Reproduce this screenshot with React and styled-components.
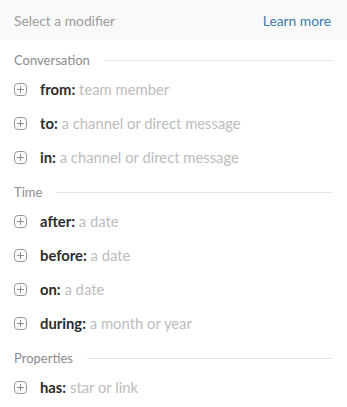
import React from "react";
import styled, { createGlobalStyle } from "styled-components";

const GlobalStyle = createGlobalStyle`
  html, body {
    margin: 0;
    padding: 0;
    background: #ffffff;
  }
  body {
    font-family: Lato, "Noto Sans", sans-serif;
    -webkit-font-smoothing: antialiased;
  }
`;

const sections = [
  {
    title: "Conversation",
    items: [
      { key: "from:", hint: "team member" },
      { key: "to:", hint: "a channel or direct message" },
      { key: "in:", hint: "a channel or direct message" },
    ],
  },
  {
    title: "Time",
    items: [
      { key: "after:", hint: "a date" },
      { key: "before:", hint: "a date" },
      { key: "on:", hint: "a date" },
      { key: "during:", hint: "a month or year" },
    ],
  },
  {
    title: "Properties",
    items: [{ key: "has:", hint: "star or link" }],
  },
];

const PlusIcon = () => (
  <svg width="13" height="13" viewBox="0 0 13 13" fill="none">
    <rect x="0.5" y="0.5" width="12" height="12" rx="3.5" stroke="#979797" />
    <path d="M6.5 3.5v6M3.5 6.5h6" stroke="#8a8a8a" strokeLinecap="round" />
  </svg>
);

const App = () => {
  return (
    <>
      <GlobalStyle />
      <Panel>
        <Header>
          <HeaderTitle>Select a modifier</HeaderTitle>
          <LearnMore href="#">Learn more</LearnMore>
        </Header>
        <List>
          {sections.map((section) => (
            <Section key={section.title}>
              <SectionHeading>
                <span>{section.title}</span>
                <Rule />
              </SectionHeading>
              {section.items.map((item) => (
                <Row key={item.key}>
                  <PlusIcon />
                  <Label>
                    <strong>{item.key}</strong> <Hint>{item.hint}</Hint>
                  </Label>
                </Row>
              ))}
            </Section>
          ))}
        </List>
      </Panel>
    </>
  );
};

export default App;

const Panel = styled.div`
  width: 347px;
  height: 407px;
  background: #ffffff;
  overflow: hidden;
`;

const Header = styled.div`
  display: flex;
  justify-content: space-between;
  align-items: center;
  height: 40px;
  padding: 0 16px 0 14px;
  background: #f9f9f9;
  font-size: 13.8px;
`;

const HeaderTitle = styled.span`
  color: #9b9b9b;
`;

const LearnMore = styled.a`
  color: #3b7ca6;
  text-decoration: none;
`;

const List = styled.div`
  padding-top: 2px;
`;

const Section = styled.div`
  display: flex;
  flex-direction: column;
`;

const SectionHeading = styled.div`
  display: flex;
  align-items: center;
  gap: 14px;
  height: 30px;
  box-sizing: border-box;
  padding: 6px 15px 0 14px;
  line-height: 24px;
  font-size: 13px;
  color: #8c8c8c;
`;

const Rule = styled.div`
  flex: 1;
  height: 1px;
  background: #e2e2e2;
`;

const Row = styled.div`
  display: flex;
  align-items: center;
  gap: 13px;
  height: 34px;
  padding-left: 14px;
`;

const Label = styled.span`
  font-size: 14.8px;
  color: #2c2d30;
  strong {
    font-weight: 700;
  }
`;

const Hint = styled.span`
  color: #bcbcbc;
`;
